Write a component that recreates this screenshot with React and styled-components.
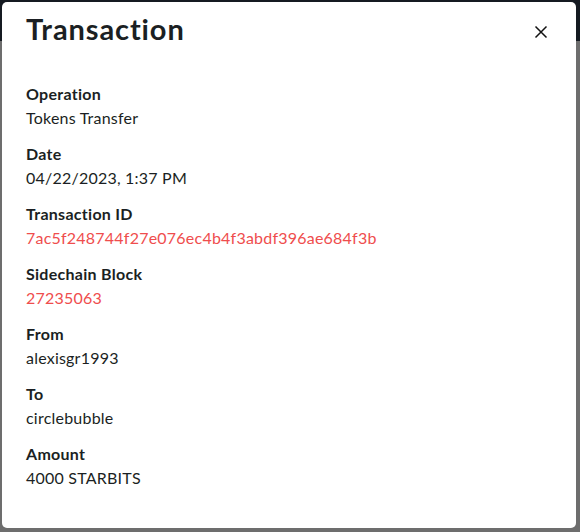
import React from 'react';
import styled, { createGlobalStyle } from 'styled-components';

const GlobalStyle = createGlobalStyle`
	html, body {
		margin: 0;
		padding: 0;
	}
	body {
		font-family: Lato, "Noto Sans", sans-serif;
		color: #1b1f23;
	}
`;

const Backdrop = styled.div`
	width: 580px;
	height: 532px;
	box-sizing: border-box;
	padding: 2px 4px 4px 2px;
	background: linear-gradient(to bottom, #151a21 0, #151a21 41px, #6d6d6d 41px, #6d6d6d 100%);
	display: flex;
`;

const Modal = styled.div`
	flex: 1;
	background: #fff;
	border-radius: 5px;
	display: flex;
	flex-direction: column;
`;

const Header = styled.div`
	display: flex;
	align-items: center;
	justify-content: space-between;
	padding: 3px 24px 0 24px;
	height: 53px;
`;

const Title = styled.h2`
	margin: 0 0 7px 0;
	font-size: 29px;
	font-weight: 700;
	line-height: 1;
	letter-spacing: 0.9px;
`;

const CloseButton = styled.button`
	border: 0;
	background: none;
	padding: 0;
	width: 22px;
	height: 22px;
	display: flex;
	align-items: center;
	justify-content: center;
	cursor: pointer;
	color: #111;
`;

const Body = styled.div`
	padding: 24px 24px 0 24px;
	display: flex;
	flex-direction: column;
	gap: 12px;
`;

const Field = styled.div`
	display: flex;
	flex-direction: column;
`;

const Label = styled.div`
	font-size: 16px;
	font-weight: 700;
	line-height: 24px;
	letter-spacing: 0.28px;
`;

const Value = styled.div`
	font-size: 16px;
	line-height: 24px;
	letter-spacing: 0.22px;
	color: ${p => (p.$link ? '#ef4d4d' : '#1b1f23')};
`;

const fields = [
	{ label: 'Operation', value: 'Tokens Transfer' },
	{ label: 'Date', value: '04/22/2023, 1:37 PM' },
	{ label: 'Transaction ID', value: '7ac5f248744f27e076ec4b4f3abdf396ae684f3b', link: true },
	{ label: 'Sidechain Block', value: '27235063', link: true },
	{ label: 'From', value: 'alexisgr1993' },
	{ label: 'To', value: 'circlebubble' },
	{ label: 'Amount', value: '4000 STARBITS' }
];

const App = () => (
	<>
		<GlobalStyle />
		<Backdrop>
			<Modal>
				<Header>
					<Title>Transaction</Title>
					<CloseButton aria-label="Close">
						<svg width="14" height="14" viewBox="0 0 14 14" fill="none" stroke="currentColor" strokeWidth="1.5">
							<path d="M1.5 1.5 L12.5 12.5 M12.5 1.5 L1.5 12.5" />
						</svg>
					</CloseButton>
				</Header>
				<Body>
					{fields.map(f => (
						<Field key={f.label}>
							<Label>{f.label}</Label>
							<Value $link={f.link}>{f.value}</Value>
						</Field>
					))}
				</Body>
			</Modal>
		</Backdrop>
	</>
);

export default App;
